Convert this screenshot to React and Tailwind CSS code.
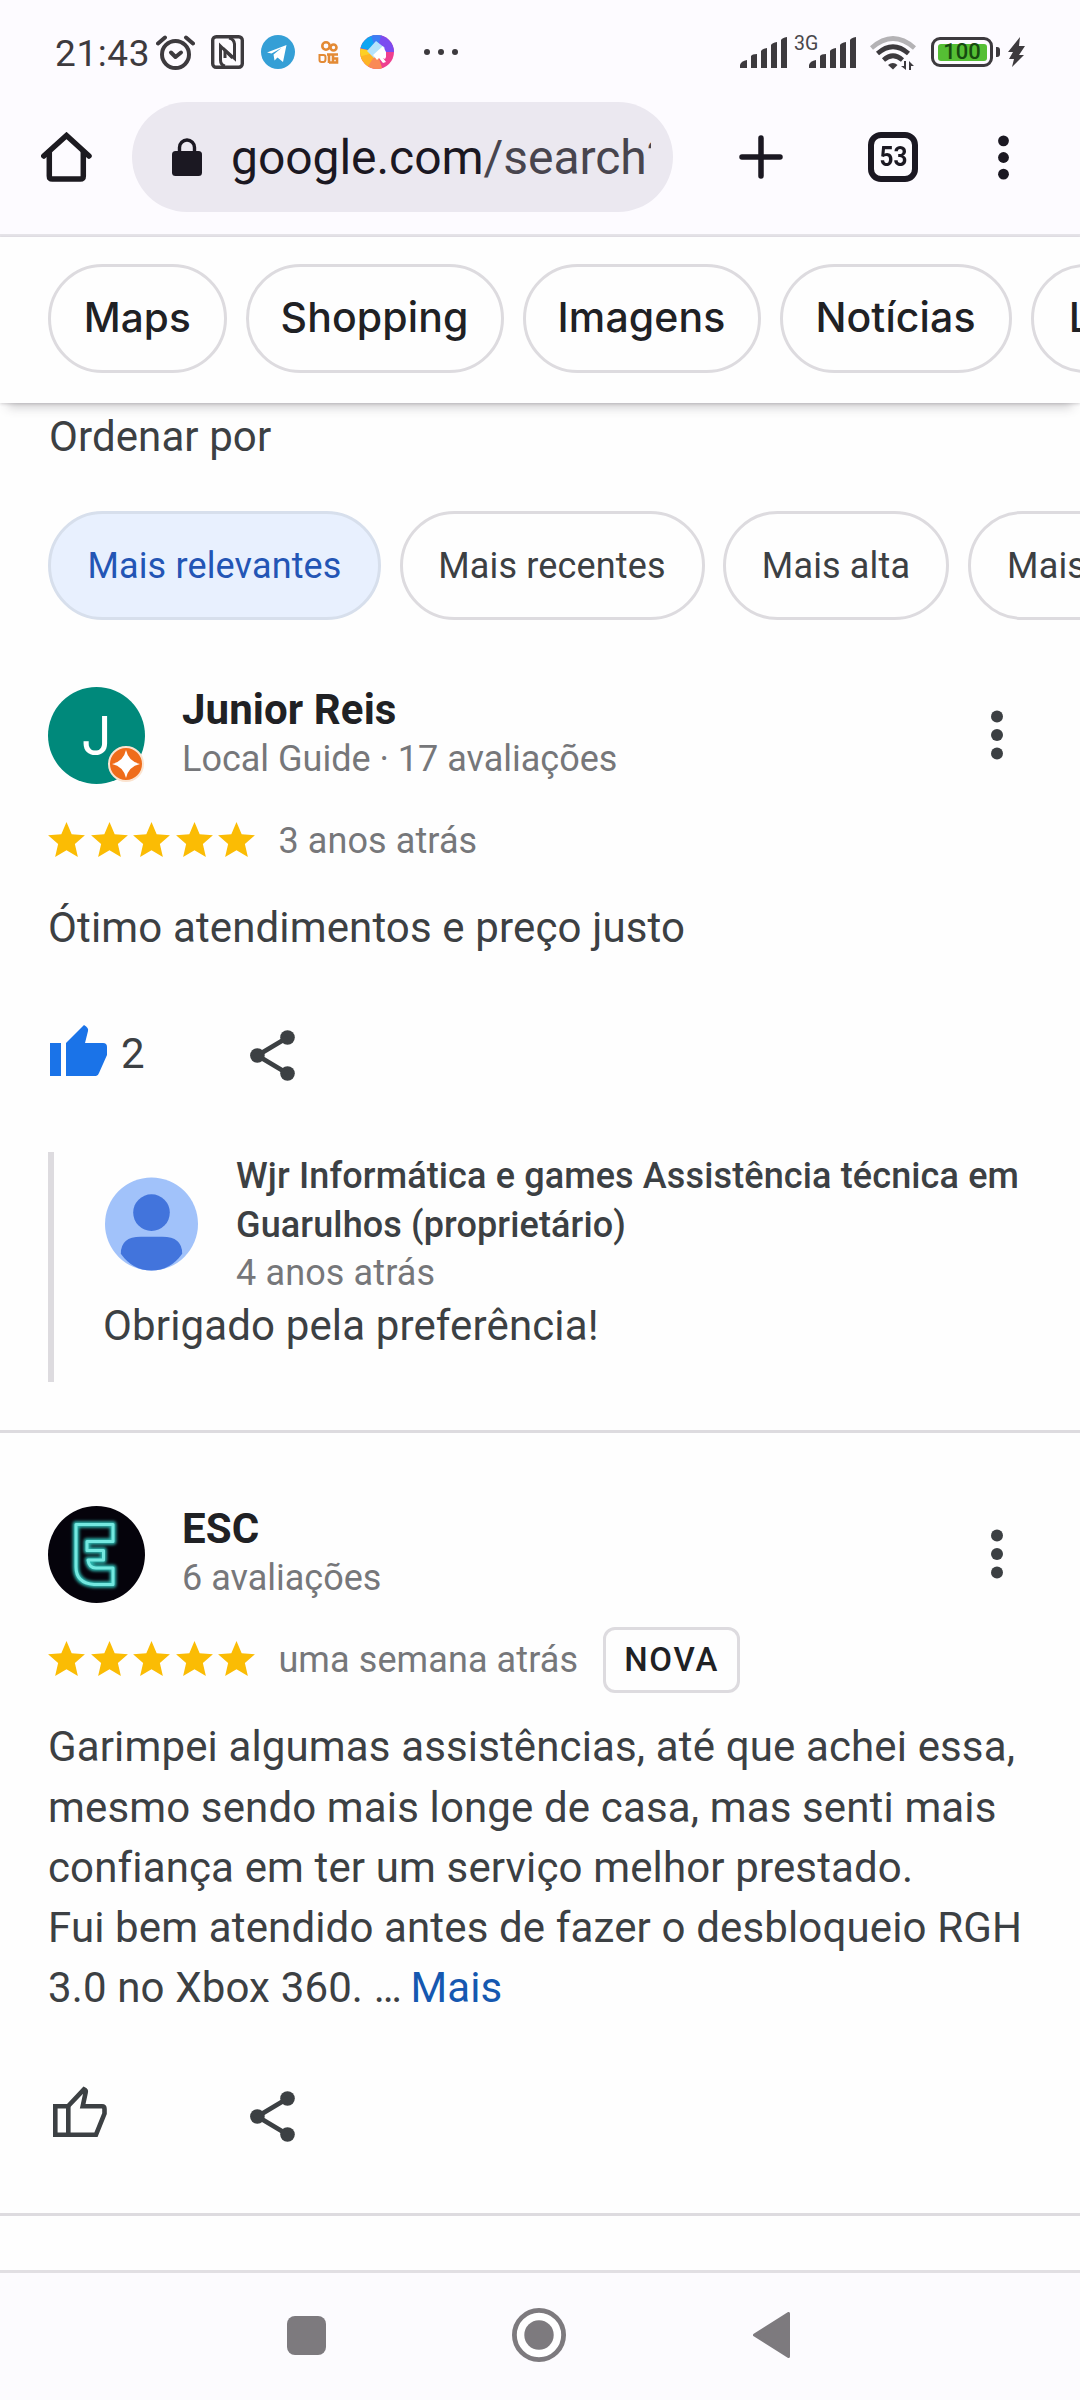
import React from 'react';

const tabs = [
  { name: 'Maps', width: 'w-[178.5px]', text: 'text-[40.5px]' },
  { name: 'Shopping', width: 'w-[258px]', text: 'text-[41px]' },
  { name: 'Imagens', width: 'w-[238px]', text: 'text-[41px]' },
  { name: 'Notícias', width: 'w-[232px]', text: 'text-[41px]' },
  { name: 'Livros', width: 'w-[196px]', text: 'text-[41px]' }
];

const sortOptions = [
  { name: 'Mais relevantes', width: 'w-[333px]', active: true },
  { name: 'Mais recentes', width: 'w-[305px]' },
  { name: 'Mais alta', width: 'w-[226px]' },
  { name: 'Mais baixa', width: 'w-[254px]' }
];

const Signal = ({ className }) => (
  <svg viewBox="0 0 48 31" className={`w-[48px] h-[31px] fill-[#3d3a3e] ${className || ''}`}>
    <path d="M0 31v-3q1-4 7-5v8z" />
    <path d="M11 31V19q1-2 6-2v14z" />
    <path d="M21 31V14q1-2 6-3v20z" />
    <path d="M31 31V8q1-2 6-3v26z" />
    <path d="M41 31V3q1-2 6-3v31z" />
  </svg>
);

const Dots = ({ className }) => (
  <svg viewBox="0 0 12 50" className={className}>
    <circle cx="6" cy="6.500" r="6" />
    <circle cx="6" cy="25" r="6" />
    <circle cx="6" cy="43.500" r="6" />
  </svg>
);

const StatusBar = () => (
  <div className="flex items-center h-[102px] pt-[2px] pl-[55px]">
    <span className="w-[101px] pt-[3px] text-[37px] leading-none tracking-[0.6px] text-[#3d3a3e]">21:43</span>

    {/* alarm */}
    <svg viewBox="0 0 39 35" className="w-[39px] h-[35px]" fill="none" stroke="#3d3a3e" strokeWidth="4" strokeLinecap="round">
      <circle cx="19.500" cy="19.500" r="13.500" />
      <path d="M2 8.500L9 2.500M37 8.500L30 2.500" />
      <path d="M15 17.500l4.500 4.500 5.500-4.500" strokeLinejoin="round" />
    </svg>

    {/* nfc */}
    <svg viewBox="0 0 33 34" className="w-[33px] h-[34px] ml-[16px]" fill="none" stroke="#3d3a3e">
      <rect x="1.700" y="1.700" width="29.600" height="30.600" rx="3.500" strokeWidth="3.400" />
      <path d="M14 31Q9.500 30 9.500 25V11l12 12" strokeWidth="3" />
      <path d="M18 3Q23 4 23.500 9v14.500L14 15v8" strokeWidth="3" />
    </svg>

    {/* telegram */}
    <svg viewBox="0 0 34 34" className="w-[34px] h-[34px] ml-[17px]">
      <circle cx="17" cy="17" r="17" fill="#359fd6" />
      <path d="M6 17.500L25.500 10 22 27l-5.500-4.500-3 3-1-6 8-6.500-10 5.500z" fill="#fff" />
    </svg>

    {/* kwai */}
    <svg viewBox="0 0 21 23" className="w-[21px] h-[23px] ml-[23px]" fill="none" stroke="#e38a35" strokeWidth="2.600">
      <circle cx="8" cy="5" r="3.700" />
      <circle cx="15.500" cy="6.500" r="3" />
      <path d="M1.500 14v5q0 2 2 2h2q2 0 2-3v-2q0-2-2-2z" strokeWidth="2" />
      <path d="M9 13.500h11M11 14v8M15 14v8M15 17.500h4v4h-8" />
    </svg>

    {/* gallery brush */}
    <svg viewBox="0 0 34 34" className="w-[34px] h-[34px] ml-[21px]">
      <defs>
        <clipPath id="brushClip"><circle cx="17" cy="17" r="17" /></clipPath>
      </defs>
      <g clipPath="url(#brushClip)">
        <rect width="34" height="34" fill="#ee3f8f" />
        <path d="M17 17L-4 12V-4h18z" fill="#0fa5f2" />
        <path d="M17 17L9-4h16z" fill="#3d7df5" />
        <path d="M17 17L22-4h14v21z" fill="#7b4bf0" />
        <path d="M17 17L-2 13v12z" fill="#fdd024" />
        <path d="M17 17L-2 22v14h10z" fill="#fdb424" />
        <path d="M17 17L5 36h18z" fill="#f98a56" />
        <path d="M7 16l9-10 9 7-11 10z" fill="#b5e3fb" />
        <path d="M13 20l10-9 3 6v5l-1 2-2-1 3 4-3 1-4-5-2 2z" fill="#fff" />
      </g>
    </svg>

    <svg viewBox="0 0 36 8" className="w-[36px] h-[8px] ml-[29px] fill-[#3d3a3e]">
      <circle cx="4" cy="4" r="3" />
      <circle cx="18" cy="4" r="3" />
      <circle cx="32" cy="4" r="3" />
    </svg>

    <Signal className="ml-[281px]" />
    <span className="w-[21px] ml-[6px] pb-[17px] text-[19.500px] leading-none text-[#4a474b] whitespace-nowrap">3G</span>
    <Signal className="-ml-[6px]" />

    {/* wifi */}
    <svg viewBox="0 0 46 34" className="w-[46px] h-[34px] ml-[13px] mt-[1px]" fill="none" stroke="#3d3a3e" strokeWidth="4.600">
      <path d="M1.500 12Q23-7 44.500 12" stroke="#b4b2b5" />
      <path d="M7.500 17.500q15.500-13.500 31 0" />
      <path d="M13.500 24q9.500-8.500 19 0" />
      <path d="M23 33.500l-5-4.500q5-4 9.500 0z" fill="#3d3a3e" stroke="none" />
      <path d="M31 30l5 4V25h-2v5zM39 34v-9l5 5h-3v4z" fill="#3d3a3e" stroke="none" />
    </svg>

    {/* battery */}
    <div className="flex items-center ml-[15px]">
      <div className="w-[62px] h-[30px] p-[3.5px] rounded-[9px] border-[3px] border-[#3d3a3e]">
        <div className="flex items-center justify-center h-full rounded-[3px] bg-[#55bf34] text-[22px] leading-none font-medium text-[#174a10]">100</div>
      </div>
      <div className="w-[4px] h-[10px] ml-[3px] rounded-r-[3px] bg-[#3d3a3e]" />
      <svg viewBox="0 0 18 30" className="w-[18px] h-[30px] ml-[7px] fill-[#3d3a3e]">
        <path d="M13 0L1 15h5l-4 7h5l-2 8 12-12h-5l6-9h-6z" />
      </svg>
    </div>
  </div>
);

const Toolbar = () => (
  <div className="h-[135px] border-b-[3px] border-[#e5e3e8]">
    <div className="flex items-center h-[110px] pl-[41px]">
      <svg viewBox="0 0 51 50" className="w-[51px] h-[50px]" fill="none" stroke="#1c1a20" strokeWidth="5.500" strokeLinejoin="round" strokeLinecap="round">
        <path d="M2.800 24L25.500 3.500 48 24" strokeLinejoin="miter" />
        <path d="M8.300 20v24q0 3 3 3h28q3 0 3-3V20" />
      </svg>
      <div className="flex items-center w-[541px] h-[110px] ml-[40px] pl-[40px] rounded-full bg-[#ebe8f0]">
        <svg viewBox="0 0 30 38" className="w-[30px] h-[38px]">
          <rect y="13" width="30" height="25" rx="3.500" fill="#1b1822" />
          <path d="M7.500 15V9.500a7.500 7.500 0 0 1 15 0V15" fill="none" stroke="#1b1822" strokeWidth="3.400" />
        </svg>
        <div className="w-[420px] ml-[29px] pt-[2px] overflow-hidden whitespace-nowrap text-[48px] leading-[60px] tracking-[-0.05px] text-[#1b1822]">
          google.com<span className="text-[#48454e]">/search?</span>
        </div>
      </div>
      <svg viewBox="0 0 44 44" className="w-[44px] h-[44px] ml-[66px]" stroke="#1b1822" strokeWidth="5.500" strokeLinecap="round">
        <path d="M22 3v38M3 22h38" />
      </svg>
      <div className="flex items-center justify-center w-[50px] h-[50px] ml-[85px] rounded-[13px] border-[6px] border-[#1b1822]">
        <span className="scale-x-90 text-[27px] leading-none font-bold text-[#1b1822]">53</span>
      </div>
      <Dots className="w-[11px] h-[45px] ml-[80px] fill-[#1b1822]" />
    </div>
  </div>
);

const Stars = () => (
  <div className="flex gap-[5.6px] mb-[1px]">
    {[1, 2, 3, 4, 5].map(n => (
      <svg key={n} viewBox="2 2 20 19" className="w-[37px] h-[35px] fill-[#fbbc04]">
        <path d="M12 17.270L18.180 21l-1.640-7.030L22 9.240l-7.190-.610L12 2 9.190 8.630 2 9.240l5.460 4.730L5.820 21z" />
      </svg>
    ))}
  </div>
);

const Like = ({ liked }) => liked ? (
  <svg viewBox="0 0 57 51" className="w-[57px] h-[51px] ml-[2px] mb-[7px] fill-[#1a73e8]">
    <path d="M0 18h11v33H0z" />
    <path d="M16 18L34 0q5 3 4 6l-3 12h18q4 0 4 4v8L49 48q-1 3-3 3H16z" />
  </svg>
) : (
  <svg viewBox="0 0 54 51" className="w-[54px] h-[51px] ml-[5px] mb-[6px]" fill="none" stroke="#3c4043" strokeWidth="4.600">
    <path d="M2.300 20.300H15L31 3.300q2.200 1 1.700 3L29.700 20.300H49q2.500 0 2.500 2.700v4.500L43 48.700H2.300z" />
    <path d="M15.300 20.300v28.400" />
  </svg>
);

const Share = () => (
  <svg viewBox="0 0 45 51" className="w-[45px] h-[51px] mt-[3px] fill-[#3c4043]">
    <circle cx="37.500" cy="7.500" r="7.300" />
    <circle cx="7.400" cy="25.500" r="7.300" />
    <circle cx="37.500" cy="43.500" r="7.300" />
    <path d="M37.500 7.500L7.400 25.500l30.100 18" fill="none" stroke="#3c4043" strokeWidth="4.800" />
  </svg>
);

const JuniorAvatar = () => (
  <div className="relative flex justify-center w-[97px] h-[97px] rounded-full bg-[#00897b]">
    <span className="font-['Inter'] text-[54px] leading-[97px] text-white">J</span>
    <svg viewBox="0 0 36 36" className="absolute right-[1px] bottom-[2px] w-[36px] h-[36px]">
      <circle cx="18" cy="18" r="17" fill="#ef6c1a" stroke="#fbe3cf" strokeWidth="2" />
      <path d="M18 4q2.500 11.500 14 14-11.500 2.500-14 14-2.500-11.500-14-14 11.500-2.500 14-14z" fill="#fff" />
    </svg>
  </div>
);

const EscAvatar = () => (
  <svg viewBox="0 0 97 97" className="w-[97px] h-[97px]" fill="none" strokeLinejoin="round">
    <defs>
      <filter id="neon" x="-30%" y="-30%" width="160%" height="160%"><feGaussianBlur stdDeviation="1.800" /></filter>
    </defs>
    <circle cx="48.500" cy="48.500" r="48.500" fill="#05030b" />
    <path d="M28 18.500H65V35.500H39V44.500H55.500V54H40Q41 62 48 62H65V78.500H46Q28 77 28 61z" stroke="#2bb5ae" strokeWidth="6.500" filter="url(#neon)" />
    <path d="M28 18.500H65V35.500H39V44.500H55.500V54H40Q41 62 48 62H65V78.500H46Q28 77 28 61z" stroke="#74e8e0" strokeWidth="3" />
  </svg>
);

const Review = ({ avatar, name, info, time, isNew, text, likes, children, className }) => (
  <article className={`px-[48px] border-b-[3px] border-[#dddbdf] ${className}`}>
    <div className="flex h-[97px]">
      {avatar}
      <div className="-mt-[1px] ml-[37px] flex-1">
        <h3 className="text-[42px] leading-[48px] font-bold tracking-[0.1px] text-[#202124]">{name}</h3>
        <p className="mt-[1px] text-[36px] leading-[48px] text-[#76777a]">{info}</p>
      </div>
      <Dots className="w-[12px] h-[50px] mt-[23px] mr-[29px] fill-[#3c4043]" />
    </div>

    <div className="flex items-center h-[40px] mt-[36px]">
      <Stars />
      <span className="ml-[23px] pt-[1px] text-[36px] leading-[40px] tracking-[0.1px] text-[#76777a]">{time}</span>
      {isNew && (
        <span className="ml-[25px] mt-[2px] pl-[18px] w-[137px] h-[66px] rounded-[12px] border-[3px] border-[#dddbdf] text-[33px] leading-[60px] font-medium tracking-[1.8px] text-[#202124]">NOVA</span>
      )}
    </div>

    <p className="mt-[38px] -mr-[20px] text-[42px] leading-[60.25px] tracking-[0.14px] text-[#3c4043]">{text}</p>

    <div className="flex items-center h-[60px] mt-[66px]">
      <div className="flex items-center w-[201.500px]">
        <Like liked={likes > 0} />
        {likes > 0 && <span className="ml-[14px] text-[42px] leading-[60px] text-[#3c4043]">{likes}</span>}
      </div>
      <Share />
    </div>

    {children}
  </article>
);

const OwnerReply = () => (
  <div className="h-[230px] mt-[68px] pl-[50px] border-l-[6px] border-[#dddbdf]">
    <div className="flex h-[146px]">
      <svg viewBox="0 0 96 96" className="w-[95px] h-[96px] mt-[24px]">
        <circle cx="48" cy="48" r="47" fill="#a1c2fa" />
        <circle cx="48" cy="36.500" r="18.500" fill="#4274dc" />
        <path d="M17 78q0-17 20-17h22q20 0 20 17-12 17-31 17T17 78z" fill="#4274dc" />
      </svg>
      <div className="ml-[37px] text-[36px] tracking-[0.13px]">
        <p className="leading-[49px] font-medium text-[#3c4043]">
          Wjr Informática e games Assistência técnica em<br />Guarulhos (proprietário)
        </p>
        <p className="leading-[47px] text-[#76777a]">4 anos atrás</p>
      </div>
    </div>
    <p className="-ml-[1px] text-[42px] leading-[56px] tracking-[0.14px] text-[#3c4043]">Obrigado pela preferência!</p>
  </div>
);

const NavBar = () => (
  <div className="flex items-center h-[130px] pl-[287px] pb-[3px] border-t-[3px] border-[#e1dfe3] bg-[#fcfbfe]">
    <div className="w-[39px] h-[39px] rounded-[8px] bg-[#7d7a7e]" />
    <svg viewBox="0 0 54 54" className="w-[54px] h-[54px] ml-[186px]">
      <circle cx="27" cy="27" r="24.600" fill="#fff" stroke="#7d7a7e" strokeWidth="4.800" />
      <circle cx="27" cy="27" r="14.700" fill="#7d7a7e" />
    </svg>
    <svg viewBox="0 0 38 46" className="w-[38px] h-[46px] ml-[187px]" fill="#7d7a7e" stroke="#7d7a7e" strokeWidth="3" strokeLinejoin="round">
      <path d="M1.500 23L35.500 1.500v43z" />
    </svg>
  </div>
);

const App = () => {
  return (
    <div className="flex flex-col w-[1080px] h-[2400px] overflow-hidden bg-[#fefefe] font-['Roboto',sans-serif]">
      <div className="bg-[#fdfbff]">
        <StatusBar />
        <Toolbar />
      </div>

      <div className="relative z-10 flex gap-[19px] h-[166px] pt-[27px] pl-[48px] bg-[#fefefe] shadow-[0_1px_3px_rgba(60,55,65,0.2),0_12px_10px_-8px_rgba(60,55,65,0.25)]">
        {tabs.map(tab => (
          <div key={tab.name} className={`${tab.width} ${tab.text} shrink-0 flex items-center justify-center h-[109px] pb-[1px] rounded-full border-[3px] border-[#dddbdf] font-['Inter'] font-medium tracking-[0.1px] text-[#202124]`}>
            {tab.name}
          </div>
        ))}
      </div>

      <main className="flex-1 pt-[10px]">
        <h2 className="pl-[49px] text-[42px] leading-[48px] tracking-[0.1px] text-[#3c4043]">Ordenar por</h2>
        <div className="flex gap-[18.500px] mt-[50px] pl-[48px]">
          {sortOptions.map(o => (
            <div
              key={o.name}
              className={`${o.width} shrink-0 flex items-center justify-center h-[109px] rounded-full border-[3px] text-[36px] tracking-[0.15px]
                ${o.active ? 'border-[#d7dfec] bg-[#e8f0fe] text-[#2355b5]' : 'border-[#dddbdf] text-[#3c4043]'}`}
            >
              {o.name}
            </div>
          ))}
        </div>

        <Review
          className="pt-[67px] pb-[48px]"
          avatar={<JuniorAvatar />}
          name="Junior Reis"
          info="Local Guide · 17 avaliações"
          time="3 anos atrás"
          text="Ótimo atendimentos e preço justo"
          likes={2}
        >
          <OwnerReply />
        </Review>

        <Review
          className="pt-[73px] pb-[68px]"
          avatar={<EscAvatar />}
          name="ESC"
          info="6 avaliações"
          time="uma semana atrás"
          isNew
          likes={0}
          text={
            <>
              Garimpei algumas assistências, até que achei essa,<br />
              mesmo sendo mais longe de casa, mas senti mais<br />
              confiança em ter um serviço melhor prestado.<br />
              Fui bem atendido antes de fazer o desbloqueio RGH<br />
              3.0 no Xbox 360. … <span className="-ml-[2px] text-[#1558b0]">Mais</span>
            </>
          }
        />
      </main>

      <NavBar />
    </div>
  );
};

export default App;
